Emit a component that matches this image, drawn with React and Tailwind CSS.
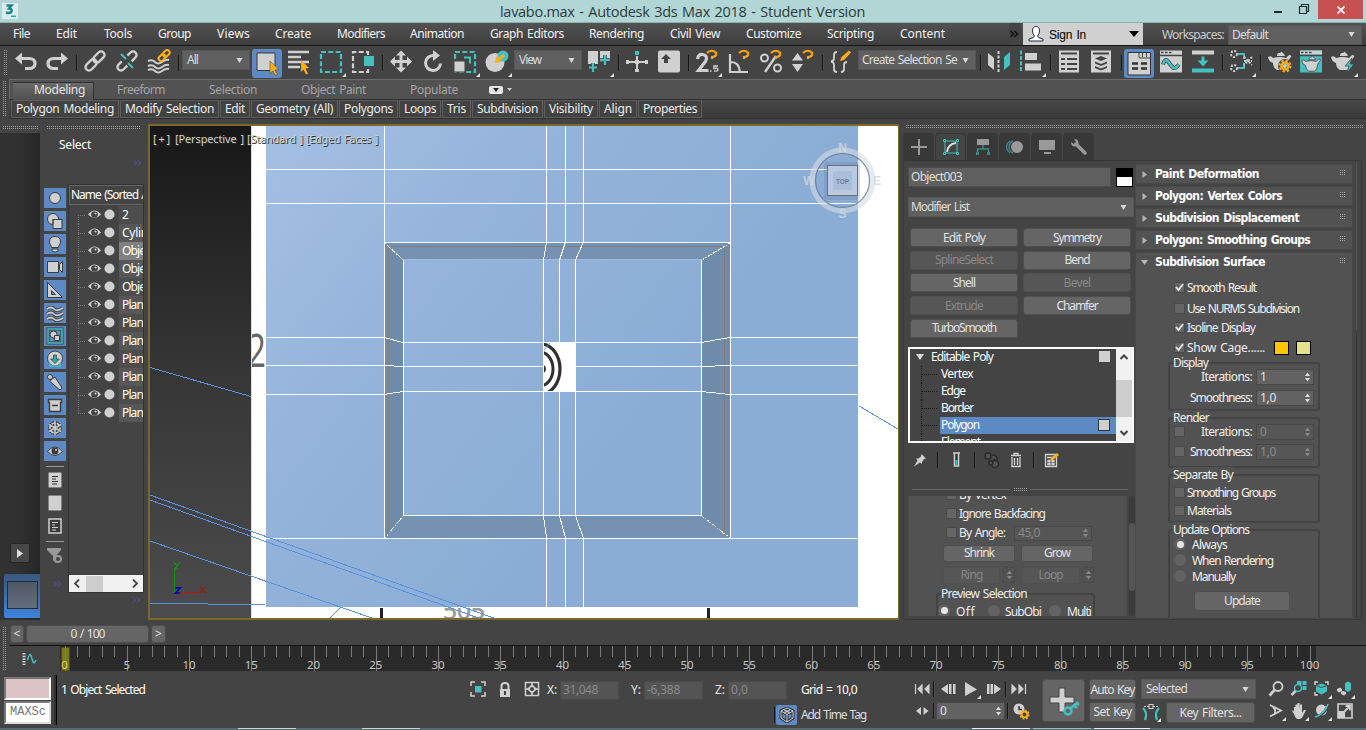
import React, { useLayoutEffect, useRef } from "react";

const L = "#d0d0d0";
const T = "#45c0c0";
const O = "#f9ae1c";

/* Text run whose tracking is adjusted to occupy w pixels */
function Txt({ w, className = "", children }) {
  const ref = useRef(null);
  useLayoutEffect(() => {
    const el = ref.current;
    el.style.letterSpacing = "0px";
    const natural = el.getBoundingClientRect().width;
    const n = el.textContent.length;
    if (w && n) el.style.letterSpacing = (w - natural) / n + "px";
  }, [w, children]);
  return (
    <span ref={ref} className={"inline-block shrink-0 whitespace-pre leading-[16px] [word-spacing:1.2px] " + className}>
      {children}
    </span>
  );
}

function Sep({ className = "" }) {
  return <div className={"h-4 w-[2px] shrink-0 border-r border-[#4f4f4f] bg-[#151515] " + className} />;
}

function Tool({ className = "", tri, children }) {
  return (
    <svg className={"h-7 w-7 shrink-0 " + className} viewBox="0 0 28 28" fill="none">
      {children}
      {tri && <path d="M27 24v4h-4z" fill="#e4e4e4" />}
    </svg>
  );
}

function Drop({ className = "", w, children }) {
  return (
    <div className={"flex h-5 shrink-0 items-center justify-between border border-[#565656] bg-[#606060] px-1 text-[#dcdcdc] " + className}>
      <Txt w={w}>{children}</Txt>
      <svg className="h-[5px] w-[7px] shrink-0" viewBox="0 0 7 5"><path d="M0.5 0h6L3.500 5z" fill="#d8d8d8" /></svg>
    </div>
  );
}

function Magnet({ x = 12, y = 2 }) {
  return <path d={`M${x} ${y + 2}q3-3 6-2q4 1 3 4q-1 2-4 2v2`} stroke="#f5a50a" strokeWidth="2.200" />;
}

function TitleBar() {
  return (
    <div className="flex h-[23px] shrink-0 border-b border-[#8fb0b1] bg-[#b2d5d5]">
      <svg className="ml-[2px] mt-[3px] h-4 w-4" viewBox="0 0 16 16">
        <rect width="16" height="16" fill="#dcebeb" />
        <path d="M4.500 2.500h5L7 5.500q3.500.5 2.500 3t-5.500 1" fill="none" stroke="#16868c" strokeWidth="2.400" />
        <rect x="9" y="12.500" width="5" height="1.500" fill="#2aa" />
      </svg>
      <div className="ml-[482px] mt-[4px] font-['Open_Sans','Noto_Sans',sans-serif] text-[15px] leading-none text-[#2d3b3c]">
        <Txt w={365} className="text-[14.500px]">lavabo.max - Autodesk 3ds Max 2018 - Student Version</Txt>
      </div>
      <div className="ml-auto flex">
        <svg className="h-[22px] w-[50px]" viewBox="0 0 50 22" fill="none" stroke="#1f2a2a">
          <path d="M6 12h8" strokeWidth="2" />
          <path d="M31.500 6.500h7v7h-7zM33.500 6V4.500h7v7H39" strokeWidth="1.200" />
        </svg>
        <div className="flex h-[19px] w-[45px] items-center justify-center bg-[#c75050]">
          <svg className="h-2 w-2" viewBox="0 0 8 8"><path d="M.5.500l7 7M7.500.500l-7 7" stroke="#fff" strokeWidth="1.700" /></svg>
        </div>
        <div className="w-[3px]" />
      </div>
    </div>
  );
}

function MenuBar() {
  return (
    <div className="flex h-[23px] shrink-0 items-center border-b border-[#161616] bg-gradient-to-b from-[#525252] to-[#3e3e3e] text-[#f2f2f2]">
      <Txt className="ml-[13px]" w={17}>File</Txt>
      <Txt className="ml-[26px]" w={21}>Edit</Txt>
      <Txt className="ml-[27px]" w={28}>Tools</Txt>
      <Txt className="ml-[26px]" w={33}>Group</Txt>
      <Txt className="ml-[26px]" w={33}>Views</Txt>
      <Txt className="ml-[25px]" w={36}>Create</Txt>
      <Txt className="ml-[26px]" w={48}>Modifiers</Txt>
      <Txt className="ml-[25px]" w={54}>Animation</Txt>
      <Txt className="ml-[26px]" w={74}>Graph Editors</Txt>
      <Txt className="ml-[25px]" w={55}>Rendering</Txt>
      <Txt className="ml-[26px]" w={50}>Civil View</Txt>
      <Txt className="ml-[26px]" w={55}>Customize</Txt>
      <Txt className="ml-[26px]" w={47}>Scripting</Txt>
      <Txt className="ml-[26px]" w={45}>Content</Txt>
      <div className="ml-[64px] flex h-full w-3 items-center bg-[#444]">
        <svg className="h-2 w-3" viewBox="0 0 12 8"><path d="M1.500 1l3 3-3 3M5.500 1l3 3-3 3" fill="none" stroke="#111" strokeWidth="1.600" /></svg>
      </div>
      <div className="ml-[2px] flex h-[22px] w-[120px] items-center bg-[#d0d0d0] text-black">
        <svg className="ml-[5px] h-4 w-4" viewBox="0 0 16 16"><path d="M4.500 5q0-4.500 3.500-4.500t3.500 4.500q0 3-2 5q0 2 5.500 3v2H1v-2q5.500-1 5.500-3q-2-2-2-5z" fill="#fff" stroke="#222b44" /></svg>
        <Txt className="ml-[5px] mt-px font-['Liberation_Sans',sans-serif] text-[12px]" w={37}>Sign In</Txt>
        <svg className="ml-[43px] h-[6px] w-[10px]" viewBox="0 0 10 6"><path d="M0 0h10L5 6z" fill="#000" /></svg>
      </div>
      <Txt className="ml-[19px] mt-[2px] text-[#c9c9c9]" w={62}>Workspaces:</Txt>
      <Drop className="ml-1 mt-px w-[134px] pl-[3px] pr-[6px]" w={36}>Default</Drop>
    </div>
  );
}

const teapot = "M0 8q3-2 5 1q7-2 13 0l3-3q3 0 2 2l-3 4q-1 8-4 9H9q-4-2-4-7q-4-1-5-6zM9 7q0-3 2-3t2-1 2 1 2 3z";

function Toolbar() {
  return (
    <div className="flex h-[33px] shrink-0 items-center overflow-hidden bg-[#444] pt-[1px]">
      <div className="ml-[3px] h-[26px] w-[4px] shrink-0 bg-[conic-gradient(#9a9a9a_25%,transparent_0)] bg-[length:2px_2px]" />
      <Tool className="ml-[7px]"><path d="M3 9.500h12q6 0 6 5t-6 5h-4" stroke={L} strokeWidth="3.200" /><path d="M1 9.500l7-6v12z" fill={L} /></Tool>
      <Tool className="ml-[3px]"><path d="M21 9.500H9q-6 0-6 5T9 19.500h4" stroke={L} strokeWidth="3.200" /><path d="M23 9.500l-7-6v12z" fill={L} /></Tool>
      <Sep className="ml-[3px]" />
      <Tool className="ml-[6px]"><g transform="rotate(-45 11 12)" stroke={L} strokeWidth="2.400"><rect x="-1" y="8.500" width="13" height="7" rx="3.500" /><rect x="10" y="8.500" width="13" height="7" rx="3.500" /></g></Tool>
      <Tool className="ml-1"><g transform="rotate(-45 11 12)" strokeWidth="2.400"><path d="M7 8.500H2.500a3.500 3.500 0 000 7H8M15 8.500h4.500a3.500 3.500 0 010 7H14" stroke={L} /></g><path d="M5 5l5 5M12 14l5 5" stroke={T} strokeWidth="2" /></Tool>
      <Tool className="ml-[3px]"><g stroke={L} strokeWidth="2"><path d="M1 12q4-2 7 1t7 0 7-2M1 17q4-2 7 1t7 0 7-2M1 21q4-2 7 1t7 0 7-2" /></g><g transform="rotate(-45 17 6)" stroke={O} strokeWidth="2"><rect x="10" y="4" width="7.500" height="5" rx="2.500" /><rect x="16" y="4" width="7.500" height="5" rx="2.500" /></g></Tool>
      <Sep className="ml-[3px]" />
      <Drop className="-mt-[6px] ml-[2px] w-[68px] pr-[6px]" w={11}>All</Drop>
      <div className="ml-[2px] flex h-[29px] w-[30px] shrink-0 rounded-[3px] bg-[#5d8ac4]">
        <svg className="h-7 w-[30px]" viewBox="0 0 30 28"><path d="M5 4h18v17.500H5z" fill={L} stroke="#3b3b3b" strokeWidth="1" /><path d="M18 12l9 8.500-4 .5 2.500 4.500-2.500 1-2-4.500-3 3z" fill={O} stroke="#3b3b3b" strokeWidth=".5" /></svg>
      </div>
      <Tool className="ml-1"><path d="M2 3h21M2 8h13M2 13h21M2 18h12" stroke={L} strokeWidth="2.500" /><path d="M15 11l8 8-3.500.5 2.500 5-2 1-2.500-5-2.500 2.500z" fill={O} /></Tool>
      <Tool className="ml-[5px]" tri><rect x="2" y="3" width="20" height="20" stroke={T} strokeWidth="2.200" strokeDasharray="5 2.300" /></Tool>
      <Tool className="ml-1"><path d="M17 6V3H2v20h15v-4" stroke={L} strokeWidth="2.200" strokeDasharray="5 2.300" /><rect x="13" y="7" width="10" height="10" fill={T} /></Tool>
      <Sep className="ml-[3px]" />
      <Tool className="ml-[6px]"><path d="M11 3v18M2 12.500h19" stroke={L} strokeWidth="3" /><path d="M11 1.500l5 5H6zM11 23.500l5-5H6zM0 12.500l5-5v10zM22 12.500l-5-5v10z" fill={L} /></Tool>
      <Tool className="ml-1"><path d="M11 6.500a7.500 7.500 0 107.500 8" stroke={L} strokeWidth="3" /><path d="M11 1l7 5.500-7 5.500z" fill={L} /></Tool>
      <Tool className="ml-[3px]" tri><rect x="2" y="3" width="20" height="20" stroke={T} strokeWidth="2.200" strokeDasharray="5 2.300" /><rect x="1" y="12" width="11" height="11" fill={L} stroke="#444" /><path d="M11 8.500h6v6" stroke={T} strokeWidth="2" /></Tool>
      <Tool className="ml-1" tri><circle cx="10" cy="13.500" r="9.500" fill={L} /><circle cx="18" cy="7" r="5.500" fill={T} /><path d="M19 6l-7 6" stroke={O} strokeWidth="3" /><path d="M10 14l1-7 5 6z" fill={O} /></Tool>
      <Drop className="-mt-[6px] ml-[1px] w-[68px] pr-[6px]" w={22}>View</Drop>
      <Tool className="ml-[5px]" tri><path d="M1 2h10v13H1zM13 2h10v9l-4 2h-6z" fill={L} /><path d="M6 14v9M2 18.500h8M18 6v10M13 11h10" stroke="#444" strokeWidth="3.600" /><path d="M6 14v9M2 18.500h8M18 6v10M13 11h10" stroke={T} strokeWidth="2.200" /></Tool>
      <Sep className="ml-[3px]" />
      <Tool className="ml-[5px]"><path d="M12 7v15M2 13h20" stroke={L} strokeWidth="2" /><path d="M10 11h4v4h-4zM1 11h3v4H1zM20 11h3v4h-3zM10 20h4v3h-4z" fill={L} /><rect x="10" y="2" width="4" height="4" fill={T} /></Tool>
      <Tool className="ml-1"><rect x="1" y="1.500" width="22" height="22" rx="2" fill={L} /><path d="M9 5l5 5H11v4H7v-4H4z" fill="#444" /></Tool>
      <Sep className="ml-[3px]" />
      <Tool className="ml-[5px]" tri><path d="M2.500 10q1-5 5-4.500q6 1 3 7L3.500 21.500h10" stroke={L} strokeWidth="3.200" /><path d="M15 22h1.500M23 17h-4v2.500q4-1 4 1t-4 1.500" stroke={L} strokeWidth="1.400" /><Magnet /></Tool>
      <Tool className="ml-1"><path d="M3 5v18h18M4 13q8 0 9 10" stroke={L} strokeWidth="2.200" /><Magnet /></Tool>
      <Tool className="ml-1"><circle cx="5.500" cy="9" r="3.500" stroke={L} strokeWidth="2" /><circle cx="18.500" cy="19" r="3.500" stroke={L} strokeWidth="2" /><path d="M17 7L6 23" stroke={L} strokeWidth="2.400" /><Magnet /></Tool>
      <Tool className="ml-1"><path d="M1 11.500h11L6.500 4zM1 15h11l-5.500 8z" fill={L} /><Magnet /></Tool>
      <Sep className="ml-[3px]" />
      <Tool className="ml-[6px]"><path d="M7 3q-3 0-3 3v3q0 3-3 3.500q3 .5 3 3.500v4q0 3 3 3M11 23q3 0 3-3v-4q0-3 3-3" stroke={L} strokeWidth="1.800" /><path d="M10 12l1.500-4L19 1.500l2 2L14 11z" fill={O} /></Tool>
      <Drop className="-mt-[6px] w-[118px] pl-[3px] pr-[6px]" w={95}>Create Selection Se</Drop>
      <Sep className="ml-1" />
      <Tool className="ml-1"><path d="M2 4l6 5v12l-6-5z" fill={L} /><path d="M12.500 2v21" stroke={L} strokeWidth="2" strokeDasharray="3 1.500" /><path d="M24 3l-6 5v13l6-5z" fill={T} /></Tool>
      <Tool className="ml-[5px]" tri><path d="M2 1.500v22" stroke={T} strokeWidth="2" strokeDasharray="4 1.500" /><path d="M6 4h12v7H6zM6 14.500h16v7H6z" fill={L} /></Tool>
      <Sep className="ml-[3px]" />
      <Tool className="ml-[6px]"><rect x="1" y="1.500" width="20" height="22" fill={L} /><path d="M3 4.500h16M3 10h4M9 10h10M3 15h4M9 15h10M3 20h4M9 20h10" stroke="#444" strokeWidth="2" /></Tool>
      <Tool className="ml-1"><rect x="1" y="1.500" width="20" height="22" fill={L} /><path d="M3 4.500h16" stroke="#444" strokeWidth="2" /><path d="M11 7l6 2.500-6 2.500-6-2.500zM5 12.500l6 2.500 6-2.500v2L11 17 5 14.500zM5 17l6 2.500 6-2.500v2L11 21.500 5 19z" fill="#444" /></Tool>
      <Sep className="ml-[3px]" />
      <div className="ml-px h-[29px] w-[30px] shrink-0 rounded-[3px] bg-[#5d8ac4]">
        <svg className="h-7 w-[30px]" viewBox="0 0 30 28"><path d="M4 3.500h22.500V26H4z" fill={L} stroke="#333" /><path d="M15 4v4q0 1 1 1h10M18.500 4v4M22.500 4v4" stroke="#444" fill="none" /><path d="M8 14.500h6M17 14.500h6M8 19.500h6M17 19.500h6" stroke="#333" strokeWidth="2.500" /></svg>
      </div>
      <Tool className="ml-[5px]"><rect x="1" y="1.500" width="22" height="22" fill={L} /><path d="M0 6.500h24M2 3.500h2.500M6 3.500h2.500M10 3.500h2.500" stroke="#444" strokeWidth="1.600" /><path d="M4 15.500q2-7 5-3t5 6 6-3" stroke="#444" strokeWidth="4" /><path d="M4 15.500q2-7 5-3t5 6 6-3" stroke={T} strokeWidth="2.600" /></Tool>
      <Tool className="ml-1"><rect x="1" y="1.500" width="22" height="4" fill={L} /><rect x="1" y="19.500" width="22" height="4" fill={T} /><path d="M10.500 7.500h3v4h4L12 17.500l-5.500-6h4z" fill={T} /></Tool>
      <Sep className="ml-[3px]" />
      <Tool className="ml-[5px]" tri><path d="M9 5h6v5M9 19h6v-5" stroke={T} strokeWidth="2" /><g stroke={L} strokeWidth="2" strokeDasharray="2 1.500"><circle cx="5" cy="5" r="3" /><circle cx="5" cy="19" r="3" /><path d="M15 8l8 8M23 8l-8 8M15 12h8" /></g></Tool>
      <Sep className="ml-[3px]" />
      <Tool className="ml-[6px]"><path d={teapot} fill={L} /><circle cx="17" cy="17" r="4.500" stroke="#444" strokeWidth="5" /><circle cx="17" cy="17" r="3.500" stroke={O} strokeWidth="2.500" /><circle cx="17" cy="17" r="5.500" stroke={O} strokeWidth="2" strokeDasharray="2.300 2" /></Tool>
      <Tool className="ml-[3px]"><rect x="1" y="1.500" width="22" height="22" fill={T} /><rect x="1" y="1.500" width="22" height="4" fill={L} /><path d="M2 3.500h2.500M6 3.500h2.500M10 3.500h2.500M1 6.500h22" stroke="#444" strokeWidth="1.500" /><path d={teapot} fill={L} stroke="#444" transform="translate(2.500 5) scale(.82)" /></Tool>
      <Tool className="ml-1" tri><path d={teapot} fill={L} /><path d="M21 9l-7 8h4l-2 7 7-9h-4z" fill={T} stroke="#444" strokeWidth=".8" /></Tool>
    </div>
  );
}

function Cell({ ml = "ml-px", w, children }) {
  return (
    <div className={"flex h-[18px] shrink-0 items-center border border-[#5d5d5d] bg-[#424242] px-1 " + ml}>
      <Txt w={w}>{children}</Txt>
    </div>
  );
}

function Ribbon() {
  return (
    <div className="flex h-[40px] shrink-0 bg-[#444]">
      <div className="ml-[2px] mt-[2px] h-9 w-[4px] bg-[conic-gradient(#9a9a9a_25%,transparent_0)] bg-[length:2px_2px]" />
      <div className="ml-[3px] flex flex-1 flex-col">
        <div className="flex h-[21px] items-center border-b border-l border-t border-b-[#2e2e2e] border-l-[#696969] border-t-[#6c6c6c] bg-[#525252] text-[#a5a5a5]">
          <div className="ml-[3px] mt-[2px] flex h-[18px] w-[81px] items-center border-r border-t border-[#333] bg-gradient-to-b from-[#6a6a6a] to-[#505050] pb-[2px] text-[#e6e6e6]">
            <Txt className="ml-[21px]" w={51}>Modeling</Txt>
          </div>
          <Txt className="ml-[23px]" w={48}>Freeform</Txt>
          <Txt className="ml-[44px]" w={48}>Selection</Txt>
          <Txt className="ml-[44px]" w={65}>Object Paint</Txt>
          <Txt className="ml-[44px]" w={48}>Populate</Txt>
          <div className="ml-[31px] flex h-2 w-[14px] items-center justify-center rounded-[2px] bg-[#e6e6e6]"><svg className="h-1 w-[6px]" viewBox="0 0 6 4"><path d="M0 0h6L3 4z" fill="#222" /></svg></div>
          <svg className="ml-1 h-[3px] w-[5px]" viewBox="0 0 5 3"><path d="M0 0h5L2.500 3z" fill="#d0d0d0" /></svg>
        </div>
        <div className="flex h-[19px] border-b border-[#303030] bg-gradient-to-b from-[#484848] to-[#3a3a3a] text-[#ededed]">
          <Cell ml="ml-[2px]" w={98}>Polygon Modeling</Cell>
          <Cell w={89}>Modify Selection</Cell>
          <Cell w={20}>Edit</Cell>
          <Cell w={77}>Geometry (All)</Cell>
          <Cell w={49}>Polygons</Cell>
          <Cell w={32}>Loops</Cell>
          <Cell w={19}>Tris</Cell>
          <Cell w={61}>Subdivision</Cell>
          <Cell w={44}>Visibility</Cell>
          <Cell w={28}>Align</Cell>
          <Cell w={54}>Properties</Cell>
        </div>
      </div>
    </div>
  );
}

const K = "#3b3b3b";
const filterIcons = [
  <circle cx="11" cy="10" r="5.500" fill={L} stroke={K} />,
  <g fill={L} stroke={K}><circle cx="9" cy="8" r="5.500" /><rect x="9" y="8.500" width="9" height="9" /><path d="M9 13.500v-5h5.500" fill="none" /></g>,
  <path d="M5.500 8q0-5.500 5.500-5.500T16.500 8q0 2-2 4.500v1h-7v-1q-2-2.500-2-4.500zM8 15h6v2l-2 1h-2l-2-1z" fill={L} stroke={K} />,
  <path d="M3.500 4.500h11v11h-11zM15.500 7.500l3-3v11l-3-3z" fill={L} stroke={K} />,
  <path fillRule="evenodd" d="M3.500 2.500l15 15h-15zM7.500 10.500v4h4z" fill={L} stroke={K} />,
  <g fill="none"><path d="M3 6q4-3 7 0t9-1M3 11q4-3 7 0t9-1M3 16q4-3 7 0t9-1" stroke={K} strokeWidth="3.600" /><path d="M3 6q4-3 7 0t9-1M3 11q4-3 7 0t9-1M3 16q4-3 7 0t9-1" stroke={L} strokeWidth="1.700" /></g>,
  <g><rect x="4" y="3" width="14" height="14" fill="none" stroke={K} strokeWidth="3" /><rect x="4" y="3" width="14" height="14" fill="none" stroke={T} strokeWidth="1.500" /><circle cx="9.500" cy="8.500" r="3.500" fill={L} stroke={K} /><path d="M10.500 9.500h5v5h-5z" fill={L} stroke={K} /></g>,
  <g><circle cx="11" cy="9.500" r="7.500" fill={L} stroke={K} /><path d="M9.500 6h3v4h3L11 14.500 6.500 10h3z" fill="#2ba9a4" stroke={K} strokeWidth=".7" /><path d="M6 14v3h10v-3" fill="none" stroke={T} strokeWidth="1.500" /></g>,
  <g fill={L} stroke={K}><path d="M8 7l3-2 7 11-2 2L6 9.500z" /><circle cx="6" cy="5" r="2.500" /></g>,
  <path d="M4.500 4.500h13v3h-1v9h-11v-9h-1zM8 10.500h6" fill={L} stroke={K} strokeWidth="1.400" />,
  <g fill="none"><path d="M11 3v14M5 6.500l12 7M17 6.500l-12 7" stroke={K} strokeWidth="3.600" /><circle cx="11" cy="10" r="5" stroke={K} strokeWidth="3.400" /><path d="M11 3v14M5 6.500l12 7M17 6.500l-12 7" stroke={L} strokeWidth="1.600" /><circle cx="11" cy="10" r="5" stroke={L} strokeWidth="1.700" strokeDasharray="3 2.236" strokeDashoffset="1.500" /></g>,
  <g><path d="M3.500 10.500q7.500-9 15 0q-7.500 8-15 0z" fill={L} stroke={K} /><circle cx="11" cy="10" r="3.500" fill={K} /><circle cx="12" cy="9" r="1" fill={L} /></g>,
];

function Chev({ className = "" }) {
  return <svg className={"h-[6px] w-[9px] " + className} viewBox="0 0 9 6"><path d="M1 .5l2.500 2.500L1 5.500M5 .5l2.500 2.500L5 5.500" fill="none" stroke="#4e4e86" strokeWidth="1.300" /></svg>;
}

function Dots({ className = "" }) {
  return <div className={"h-[3px] bg-[conic-gradient(#a0a0a0_25%,transparent_0)] bg-[length:2px_2px] " + className} />;
}

const names = ["2", "Cylin", "Obje", "Obje", "Obje", "Plan", "Plan", "Plan", "Plan", "Plan", "Plan", "Plan"];
const nameWidth = { Cylin: 26, Obje: 23, Plan: 21 };

function Explorer() {
  return (
    <div className="flex w-[148px] shrink-0">
      <div className="flex w-10 flex-col pt-[7px]">
        <Dots className="ml-[2px] w-9" />
        <div className="mt-[4px] flex flex-1 flex-col bg-gradient-to-r from-[#323232] via-[#303030] to-[#262626]">
          <div className="ml-[10px] mt-[410px] flex h-5 w-5 items-center justify-center rounded-[2px] border border-[#262626] bg-[#484848]">
            <svg className="h-[9px] w-[6px]" viewBox="0 0 6 9"><path d="M0 0l6 4.500L0 9z" fill="#dcdcdc" /></svg>
          </div>
          <div className="ml-1 mt-[11px] h-[44px] rounded-l-[2px] bg-gradient-to-b from-[#39597f] to-[#3f82dd] pl-[3px] pt-[7px]">
            <div className="h-7 w-[31px] border border-[#1f2c3c] bg-gradient-to-b from-[#4f5966] to-[#636e7c]" />
          </div>
        </div>
      </div>
      <div className="flex w-[104px] flex-col pl-1 pt-[7px]">
        <Dots className="ml-[2px] w-[95px]" />
        <Txt className="ml-[15px] mt-[8px] self-start text-white" w={32}>Select</Txt>
        <Chev className="ml-[89px] mt-[7px] shrink-0" />
        <div className="mt-[18px] flex">
          <div className="flex w-[22px] flex-col gap-[3px] pt-[4px]">
            {filterIcons.map((ic, i) => (
              <svg key={i} className="h-5 w-[22px] bg-[#5d8ac4]" viewBox="0 0 22 20">{ic}</svg>
            ))}
            <div className="ml-[2px] mt-[2px] h-px w-[18px] bg-[#999]" />
            <svg className="ml-1 mt-[2px] h-4 w-[14px]" viewBox="0 0 14 16"><rect width="14" height="16" fill={L} stroke="#333" /><path d="M4 4.500h6M4 7h4M4 9.500h6M4 12h5" stroke="#333" /></svg>
            <svg className="ml-1 mt-1 h-4 w-[14px]" viewBox="0 0 14 16"><rect width="14" height="16" fill={L} stroke="#333" /></svg>
            <svg className="ml-1 mt-1 h-4 w-[14px]" viewBox="0 0 14 16"><rect x="1" y="1" width="12" height="14" fill="#3b3b3b" stroke={L} strokeWidth="1.500" /><path d="M4 4.500h6M4 7h3M4 9.500h6M4 12h4" stroke={L} /></svg>
            <div className="ml-[2px] mt-[4px] h-px w-[18px] bg-[#999]" />
            <svg className="ml-[3px] mt-[3px] h-4 w-4" viewBox="0 0 16 16"><path d="M0 0h14v2L9 8v7l-3-3V8L0 2z" fill="#999" /><circle cx="11" cy="11" r="3" fill="#444" stroke="#999" strokeWidth="2" /></svg>
            <Chev className="ml-[9px] mt-[14px]" />
          </div>
          <div className="ml-[2px] flex w-[76px] flex-col">
            <div className="flex h-[409px] flex-col overflow-hidden border-x border-t border-[#333]">
              <div className="flex h-5 shrink-0 items-center overflow-hidden border border-r-0 border-[#666] bg-[#444] pl-px text-white"><Txt w={77}>Name (Sorted A</Txt></div>
              <div className="mt-px flex flex-col">
                {names.map((n, i) => (
                  <div key={i} className="flex h-[18px] items-center">
                    <svg className="h-[18px] w-[50px] shrink-0" viewBox="0 0 50 18">
                      <path d={`M9.500 ${i ? 0 : 9}V${i === 11 ? 9 : 18}M9 9.500h8`} stroke="#777" strokeDasharray="1 1" fill="none" />
                      <path d="M19 8.500q6.500-8 13 0q-6.500 7-13 0z" fill={L} /><circle cx="25.500" cy="8.500" r="3.300" fill="#444" /><circle cx="26.500" cy="7.500" r="1" fill={L} />
                      <circle cx="40.500" cy="8.500" r="5" fill={L} />
                    </svg>
                    <div className={"flex h-[18px] flex-1 items-center overflow-hidden pl-[3px] text-white " + (i === 2 ? "bg-[#808080]" : i % 2 ? "bg-[#575757]" : "bg-[#4d4d4d]")}>
                      <Txt w={nameWidth[n]}>{n}</Txt>
                    </div>
                  </div>
                ))}
              </div>
            </div>
            <div className="-mt-[18px] flex h-[18px] items-center border-x border-b border-[#333] bg-[#f1f1f1]">
              <svg className="ml-[5px] h-[9px] w-[6px]" viewBox="0 0 6 9"><path d="M5 0.500L1 4.500l4 4" fill="none" stroke="#444" strokeWidth="1.800" /></svg>
              <div className="ml-[6px] h-4 w-[17px] bg-[#cdcdcd]" />
              <svg className="ml-[29px] h-[9px] w-[6px]" viewBox="0 0 6 9"><path d="M1 0.500l4 4-4 4" fill="none" stroke="#444" strokeWidth="1.800" /></svg>
            </div>
            <Chev className="ml-[64px] mt-1" />
          </div>
        </div>
      </div>
    </div>
  );
}

function Viewport() {
  return (
    <div className="relative mt-[5px] h-[496px] w-[751px] shrink-0">
      <svg className="h-[496px] w-[751px]" viewBox="148 124 751 496" fill="none" shapeRendering="crispEdges">
        <defs>
          <linearGradient id="dk" x1="0" y1="0" x2="0" y2="1"><stop stopColor="#171717" /><stop offset=".5" stopColor="#363636" /><stop offset="1" stopColor="#4c4c4c" /></linearGradient>
          <linearGradient id="bl" gradientUnits="userSpaceOnUse" x1="266" y1="126" x2="640" y2="420"><stop stopColor="#a4bfe4" /><stop offset=".5" stopColor="#94b3da" /><stop offset="1" stopColor="#8badd5" /></linearGradient>
          <clipPath id="hole"><rect x="544" y="343" width="31" height="48" /></clipPath>
          <clipPath id="vp"><rect x="150" y="608" width="748" height="10" /></clipPath>
          <clipPath id="lf"><rect x="252" y="320" width="14" height="60" /></clipPath>
        </defs>
        <rect x="148" y="124" width="751" height="496" fill="#7b692b" />
        <rect x="150" y="126" width="748" height="492" fill="#fff" />
        <rect x="150" y="126" width="101" height="492" fill="url(#dk)" />
        <path d="M251.500 126v492" stroke="#ddd" />
        <rect x="266" y="126" width="592" height="481" fill="url(#bl)" />
        <path d="M385 243h345v295H385z" fill="#6e8baa" />
        <path d="M385 243h345l-28 17H403zM385 538h345l-28-22H403z" fill="#7592b3" />
        <path d="M388.500 246v289M724.500 246v289M388 246.500h336" stroke="#7a7c86" />
        <path d="M403 260h299v256H403z" fill="url(#bl)" />
        <g stroke="#fff">
          <path d="M384.500 126v412M730.500 126v412M266 169.500h592M266 203.500h592M385 242.500h345M266 538.500h592M403.500 260v256M701.500 260v256M403 515.500h299" />
          <path d="M403 259.500h299" stroke="#a3bbd8" />
          <path d="M546.500 126v116l-3 18v256l3 22v69M565.500 126v116l-6 18v256l6 22v69M583.500 126v116l-8 18v256l8 22v69" />
          <path d="M385 243l18 17M730 243l-28 17M385 538l18-22M730 538l-28-22" strokeDasharray="2 1" />
          <path d="M266 337.500h118l19 5h298l29-5h128M266 365.500h118l19 1h298l29-1h128M266 394.500h118l19-3h298l29 3h128" />
        </g>
        <rect x="543" y="342" width="33" height="49" fill="#fff" />
        <g clipPath="url(#hole)" shapeRendering="auto" stroke="#303030">
          <ellipse cx="541" cy="369" rx="19" ry="25" strokeWidth="3.200" />
          <ellipse cx="540" cy="369" rx="13" ry="17" strokeWidth="3" />
          <circle cx="542" cy="369" r="3" strokeWidth="2" />
          <path d="M543 351l7-8" stroke="#5b8edb" />
        </g>
        <g shapeRendering="auto" className="font-['Open_Sans',sans-serif]">
          <text x="247" y="367" fontSize="46" fill="#666" clipPath="url(#lf)" textLength="19" lengthAdjust="spacingAndGlyphs">2</text>
          <g clipPath="url(#vp)"><text x="443" y="619" fontSize="23" fill="#999" stroke="#999" strokeWidth=".6" textLength="42" lengthAdjust="spacingAndGlyphs">505</text></g>
        </g>
        <path d="M381.500 608v10M708.500 608v10" stroke="#222" strokeWidth="3" />
        <path d="M150 367.500L251 396.500M859 406l39 23M150 495l345 123.500M150 500l330 118.500M150 541l222 77M150 603.500h58M208 604.500h57M330 618l10-10" stroke="#5a92e0" />
        <path d="M174.500 568v24" stroke="#109010" />
        <path d="M178 592.500h23" stroke="#c81010" />
        <path d="M174 562l3 4 3-4M177 566l-2 4" stroke="#20861f" strokeWidth="1.500" />
        <path d="M200 587l5 6M205 587l-5 6" stroke="#a01818" strokeWidth="1.500" />
        <path d="M175 588h5l-4 5h4" stroke="#0808b0" strokeWidth="1.800" />
        <g shapeRendering="auto">
          <circle cx="842.500" cy="180.500" r="30" stroke="#d5dce6" strokeOpacity=".6" strokeWidth="6" />
          <circle cx="842.500" cy="180.500" r="27" stroke="#60738d" strokeOpacity=".8" strokeWidth="1.200" />
          <rect x="824" y="162" width="36" height="38" rx="3" fill="#657da0" opacity=".25" />
          <rect x="827.500" y="165.500" width="30" height="30" fill="#b7cae1" stroke="#6d6f78" />
          <rect x="833" y="171" width="19" height="19" fill="#a9bedb" />
          <g textAnchor="middle" fontWeight="bold" className="font-['Liberation_Sans',sans-serif]">
            <text x="842.500" y="183.500" fontSize="8" fill="#6b7b90" textLength="13" lengthAdjust="spacingAndGlyphs">TOP</text>
            <g fill="#ced7e2" fillOpacity=".85" fontSize="12"><text x="842.500" y="152">N</text><text x="809" y="185">W</text><text x="877" y="185">E</text><text x="842.500" y="218">S</text></g>
          </g>
        </g>
      </svg>
      <div className="absolute left-[5px] top-[7px] flex text-[11px] text-[#cfcfcf] [text-shadow:1px_1px_0_#333]">
        <Txt w={19}>[+]</Txt><Txt className="ml-[3px]" w={69}>[Perspective ]</Txt><Txt className="ml-[3px]" w={56}>[Standard ]</Txt><Txt className="ml-[3px]" w={72}>[Edged Faces ]</Txt>
      </div>
    </div>
  );
}

function Btn({ dis, className = "", w, children }) {
  return (
    <div className={"flex shrink-0 items-center justify-center rounded-[3px] border " + (dis ? "border-[#505050] bg-[#565656] text-[#888] " : "border-[#4e4e4e] bg-[#656565] text-[#e2e2e2] ") + className}>
      <Txt w={w}>{children}</Txt>
    </div>
  );
}

function Arrows({ dis }) {
  return <svg className="h-[10px] w-[5px] shrink-0" viewBox="0 0 5 10"><path d="M0 4h5L2.500 0.500zM0 6h5L2.500 9.500z" fill={dis ? "#888" : "#ddd"} /></svg>;
}

function Spin({ dis, className = "", w, children }) {
  return (
    <div className={"flex shrink-0 items-center justify-between border border-[#484848] pl-[3px] pr-[3px] " + (dis ? "bg-[#565656] text-[#8a8a8a] " : "bg-[#626262] text-[#e2e2e2] ") + className}>
      <Txt w={w}>{children}</Txt><Arrows dis={dis} />
    </div>
  );
}

function Check({ on, className = "" }) {
  return (
    <div className={"mb-px h-[11px] w-[11px] shrink-0 border border-[#4a4a4a] bg-[#656565] " + className}>
      {on && <svg viewBox="0 0 9 9"><path d="M1 4l2.500 3L8 1" fill="none" stroke="#e6e6e6" strokeWidth="1.900" /></svg>}
    </div>
  );
}

function Radio({ on, className = "" }) {
  return (
    <div className={"mb-[2px] flex h-3 w-3 shrink-0 items-center justify-center rounded-full bg-[#636363] " + className}>
      {on && <div className="h-[7px] w-[7px] rounded-full bg-[#e6e6e6]" />}
    </div>
  );
}

function Group({ title, w, className = "", children }) {
  return (
    <div className={"shrink-0 rounded-[3px] border-2 border-[#434343] px-[3px] " + className}>
      <div className="-mt-[9px] flex h-4"><Txt w={w} className="bg-[#525252]">{title}</Txt></div>
      {children}
    </div>
  );
}

function Head({ open, w, children }) {
  return (
    <div className="flex h-[18px] shrink-0 items-center font-bold text-white">
      <svg className="ml-[5px] h-[7px] w-[7px]" viewBox="0 0 7 7"><path d={open ? "M0 1h7L3.500 6z" : "M1.500 0v7L6 3.500z"} fill="#b5b5b5" /></svg>
      <Txt className="ml-[7px] font-['DejaVu_Sans_Condensed','Noto_Sans',sans-serif]" w={w}>{children}</Txt>
      <div className="mb-[3px] ml-auto mr-[7px] h-[6px] w-[6px] bg-[conic-gradient(#a0a0a0_25%,transparent_0)] bg-[length:2px_2px]" />
    </div>
  );
}

function Tab({ on, children }) {
  return (
    <div className={"mr-px flex h-[27px] w-[31px] items-center justify-center rounded-t-[4px] " + (on ? "border-x border-t border-[#363636] bg-[#444]" : "bg-[#383838]")}>
      <svg className="h-[18px] w-[18px]" viewBox="0 0 18 18" fill="none">{children}</svg>
    </div>
  );
}

const stack = [["Vertex", 32], ["Edge", 24], ["Border", 32], ["Polygon", 38], ["Element", 39]];
const mods = [["Edit Poly", 42], ["Symmetry", 48], ["SplineSelect", 58, 1], ["Bend", 25], ["Shell", 22], ["Bevel", 27, 1], ["Extrude", 38, 1], ["Chamfer", 41], ["TurboSmooth", 64]];

function CommandPanel() {
  return (
    <div className="flex min-w-0 flex-1 flex-col pl-1 pt-[6px]">
      <Dots className="ml-[2px] w-[459px]" />
      <div className="mt-[5px] flex h-[27px]">
        <Tab><path d="M9 1v16M1 9h16" stroke="#999" strokeWidth="2" /></Tab>
        <Tab on><path d="M3 3h12v12H3z" stroke={T} /><path d="M1.500 1.500h2v2h-2zM14.500 1.500h2v2h-2zM1.500 14.500h2v2h-2zM14.500 14.500h2v2h-2z" fill="#444" stroke={T} /><path d="M5 14q1-8 9-9" stroke="#ddd" strokeWidth="2" /></Tab>
        <Tab><rect x="3" y="1" width="12" height="6" fill="#999" /><path d="M9 7v4M3.500 14v-3h11v3" stroke="#3b8886" strokeWidth="1.500" /><path d="M2 14h3v3H2zM13 14h3v3h-3z" fill="#3b8886" /></Tab>
        <Tab><circle cx="11" cy="9" r="6" fill="#999" /><path d="M7 3a6.500 6.500 0 000 12M4 3a7 7 0 000 12" stroke="#3b8886" strokeWidth="1.400" /></Tab>
        <Tab><path d="M1 2h16v10H1zM6 14h7v2H6z" fill="#999" /></Tab>
        <Tab><path d="M6 6l9 9" stroke="#999" strokeWidth="3.500" strokeLinecap="round" /><path d="M1 4q0 5 5 4.500L8.500 6Q9 1 4 1l2 3-2 2z" fill="#999" /></Tab>
      </div>
      <div className="mr-1 flex h-[460px] rounded-b-[3px] border border-[#383838] px-1 pt-[2px]">
        <div className="flex w-[227px] shrink-0 flex-col overflow-hidden">
          <div className="mt-[4px] flex items-center">
            <div className="flex h-5 w-[203px] items-center border border-[#4c4c4c] bg-[#606060] pl-[2px] text-[#dedede]"><Txt w={51}>Object003</Txt></div>
            <div className="ml-[5px] h-[19px] w-[17px] border border-black bg-gradient-to-b from-black from-50% to-white to-50%" />
          </div>
          <Drop className="mt-[10px] w-[226px] pl-[2px] pr-[6px]" w={58}>Modifier List</Drop>
          <div className="mt-[11px] grid grid-cols-[108px_108px] gap-x-[5px] gap-y-[3.700px] pl-[2px]">
            {mods.map(([n, w, d]) => <Btn key={n} dis={d} w={w} className="h-[19px]">{n}</Btn>)}
          </div>
          <div className="mt-[9px] flex h-[96px] w-[226px] shrink-0 border-2 border-[#fafafa]">
            <div className="flex flex-1 flex-col overflow-hidden text-white">
              <div className="flex h-[17px] shrink-0 items-center">
                <svg className="ml-[6px] h-[6px] w-2" viewBox="0 0 8 6"><path d="M0 0h8L4 6z" fill="#ddd" /></svg>
                <Txt className="ml-[7px]" w={62}>Editable Poly</Txt>
                <div className="mb-[2px] ml-auto mr-[6px] h-[11px] w-[11px] bg-[#d0d0d0]" />
              </div>
              {stack.map(([n, w], i) => (
                <div key={n} className="flex h-[17px] shrink-0 items-center">
                  <svg className="h-[17px] w-[30px] shrink-0" viewBox="0 0 30 17"><path d="M11.500 0v17M12 8.500h16" stroke="#111" strokeDasharray="1 1" /></svg>
                  <div className={"flex h-[17px] flex-1 items-center justify-between pl-px " + (i === 3 ? "bg-[#5d8ac4]" : "")}>
                    <Txt w={w}>{n}</Txt>
                    {i === 3 && <div className="mb-px mr-[6px] h-3 w-3 border border-[#333] bg-[#d0d0d0]" />}
                  </div>
                </div>
              ))}
            </div>
            <div className="flex w-4 flex-col items-center bg-[#f1f1f1]">
              <svg className="mt-[5px] h-[6px] w-2" viewBox="0 0 8 6"><path d="M.5 5L4 1.500 7.500 5" fill="none" stroke="#444" strokeWidth="2" /></svg>
              <div className="mt-5 h-[37px] w-4 bg-[#cdcdcd]" />
              <svg className="mt-[13px] h-[6px] w-2" viewBox="0 0 8 6"><path d="M.5 1L4 4.500 7.500 1" fill="none" stroke="#444" strokeWidth="2" /></svg>
            </div>
          </div>
          <div className="mt-[7px] flex h-5 shrink-0 items-center">
            <svg className="ml-[5px] h-[14px] w-[14px]" viewBox="0 0 14 14"><path d="M8.500 1l4.500 4.500-2 .5-2 3v2L7 9.500 1 13.500 4.500 7.500 3 5.500h2.500l2.500-2z" fill={L} /></svg>
            <Sep className="ml-[10px]" />
            <svg className="ml-[13px] h-4 w-[9px]" viewBox="0 0 9 16"><path d="M1 1h7M2.500 1v13h4V1" fill="#333" stroke={L} strokeWidth="1.500" /><path d="M3.500 8h2v5.500h-2z" fill={T} /></svg>
            <Sep className="ml-[13px]" />
            <svg className="ml-2 h-4 w-4" viewBox="0 0 16 16" fill="#555" stroke="#2a2a2a" strokeWidth="1.500"><circle cx="4" cy="4" r="3" /><circle cx="11" cy="12" r="3.500" /><path d="M8 3q6 0 5 6l-3-2" /><circle cx="7" cy="11" r="2" /></svg>
            <svg className="ml-[11px] h-4 w-[10px]" viewBox="0 0 10 16"><path d="M0 3.500h10M3 3V1.500h4V3M1 5v9.500h8V5M3.500 6v7M6.500 6v7" fill="none" stroke={L} strokeWidth="1.300" /></svg>
            <Sep className="ml-[12px]" />
            <svg className="ml-[9px] h-4 w-4" viewBox="0 0 16 16"><path d="M1.500 2.500h11v12h-11zM3 5.500h8M4 8.500h2v1H4zM8 8.500h2v1H8zM4 11.500h2v1H4zM8 11.500h2v1H8z" fill="none" stroke={L} strokeWidth="1.300" /><path d="M6 9l1-3 6-5 2 2-6 5z" fill={O} /></svg>
          </div>
          <div className="mt-[18px] flex items-center">
            <div className="ml-1 h-px w-[98px] bg-[#666]" /><Dots className="ml-[3px] w-[14px]" /><div className="ml-[3px] h-px w-[98px] bg-[#666]" />
          </div>
          <div className="mt-[5px] flex h-[120px] shrink-0">
            <div className="flex w-[219px] flex-col overflow-hidden border-x border-[#4c4c4c] bg-[#525252] text-[#ededed]">
              <div className="-mt-[10px] flex h-[18px] shrink-0 items-center pl-[37px]"><Check /><Txt className="ml-[2px]" w={47}>By Vertex</Txt></div>
              <div className="mt-px flex h-[18px] shrink-0 items-center pl-[37px]"><Check /><Txt className="ml-[2px]" w={86}>Ignore Backfacing</Txt></div>
              <div className="mt-px flex h-[19px] shrink-0 items-center pl-[37px]"><Check /><Txt className="ml-[2px]" w={46}>By Angle:</Txt><Spin dis className="ml-[9px] h-[15px] w-[78px]" w={22}>45,0</Spin></div>
              <div className="mt-[2px] flex gap-[6px] pl-[34px]"><Btn className="h-[17px] w-[72px]" w={30}>Shrink</Btn><Btn className="h-[17px] w-[72px]" w={26}>Grow</Btn></div>
              <div className="mt-[5px] flex pl-[34px]">
                <Btn dis className="h-[17px] w-[57px]" w={22}>Ring</Btn><div className="ml-[3px] flex h-4 w-3 items-center justify-center border border-[#4a4a4a]"><Arrows dis /></div>
                <Btn dis className="ml-[6px] h-[17px] w-[59px]" w={24}>Loop</Btn><div className="ml-[2px] flex h-4 w-3 items-center justify-center border border-[#4a4a4a]"><Arrows dis /></div>
              </div>
              <Group title="Preview Selection" w={86} className="ml-[27px] mt-[9px] h-[60px] w-[159px]">
                <div className="mt-[2px] flex h-4 items-center"><Radio on className="-ml-[3px]" /><Txt className="ml-[6px]" w={19}>Off</Txt><Radio className="ml-[13px]" /><Txt className="ml-[5px]" w={36}>SubObj</Txt><Radio className="ml-[8px]" /><Txt className="ml-[6px]" w={24}>Multi</Txt></div>
              </Group>
            </div>
            <div className="ml-[2px] w-[6px] rounded-[3px] bg-[#3a3a3a] pt-[27px]"><div className="h-[68px] rounded-[3px] bg-[#555]" /></div>
          </div>
        </div>
        <div className="flex w-[218px] shrink-0 flex-col gap-[2px] overflow-hidden pt-px">
          {[["Paint Deformation", 104], ["Polygon: Vertex Colors", 127], ["Subdivision Displacement", 144], ["Polygon: Smoothing Groups", 155]].map(([n, w]) => (
            <div key={n} className="h-5 shrink-0 rounded-[2px] border border-[#484848] bg-[#525252]"><Head w={w}>{n}</Head></div>
          ))}
          <div className="flex flex-1 flex-col overflow-hidden rounded-t-[2px] border border-[#484848] bg-[#525252] text-[#f0f0f0]">
            <Head open w={110}>Subdivision Surface</Head>
            <div className="flex flex-col pl-[33px]">
              <div className="mt-[9px] flex h-4 items-center pl-[5px]"><Check on /><Txt className="ml-[2px]" w={69}>Smooth Result</Txt></div>
              <div className="mt-[5px] flex h-4 items-center pl-[5px]"><Check /><Txt className="ml-[2px]" w={112}>Use NURMS Subdivision</Txt></div>
              <div className="mt-[3px] flex h-4 items-center pl-[5px]"><Check on /><Txt className="ml-[2px]" w={68}>Isoline Display</Txt></div>
              <div className="mt-[4px] flex h-4 items-center pl-[5px]"><Check on /><Txt className="ml-[2px]" w={78}>Show Cage......</Txt><div className="mb-px ml-[9px] h-[14px] w-[15px] border border-black bg-[#ffc600]" /><div className="mb-px ml-[7px] h-[14px] w-[15px] border border-black bg-[#e3e28b]" /></div>
              <Group title="Display" w={35} className="-ml-px mt-[6px] h-[49px] w-[152px]">
                <div className="-mt-[2px] flex h-4 items-center justify-end pr-px"><Txt w={51}>Iterations:</Txt><Spin className="ml-1 h-4 w-[58px]">1</Spin></div>
                <div className="mt-[5px] flex h-4 items-center justify-end pr-px"><Txt w={62}>Smoothness:</Txt><Spin className="ml-1 h-4 w-[58px]" w={16}>1,0</Spin></div>
              </Group>
              <Group title="Render" w={36} className="-ml-px mt-[6px] h-[51px] w-[152px]">
                <div className="-mt-[2px] flex h-4 items-center pr-px"><Check className="ml-px" /><Txt w={51} className="ml-auto">Iterations:</Txt><Spin dis className="ml-1 h-4 w-[58px]">0</Spin></div>
                <div className="mt-[4px] flex h-4 items-center pr-px"><Check className="ml-px" /><Txt w={62} className="ml-auto">Smoothness:</Txt><Spin dis className="ml-1 h-4 w-[58px]" w={16}>1,0</Spin></div>
              </Group>
              <Group title="Separate By" w={60} className="-ml-px mt-[6px] h-[49px] w-[152px]">
                <div className="mt-[2px] flex h-4 items-center"><Check className="ml-px" /><Txt className="ml-[2px]" w={88}>Smoothing Groups</Txt></div>
                <div className="mt-[2px] flex h-4 items-center"><Check className="ml-px" /><Txt className="ml-[2px]" w={44}>Materials</Txt></div>
              </Group>
              <Group title="Update Options" w={76} className="-ml-px mt-[6px] h-[100px] w-[152px]">
                <div className="-mt-px flex h-4 items-center"><Radio on className="ml-px" /><Txt className="ml-[6px]" w={35}>Always</Txt></div>
                <div className="flex h-4 items-center"><Radio className="ml-px" /><Txt className="ml-[6px]" w={81}>When Rendering</Txt></div>
                <div className="flex h-4 items-center"><Radio className="ml-px" /><Txt className="ml-[6px]" w={43}>Manually</Txt></div>
                <Btn className="ml-[21px] mt-[6px] h-5 w-24" w={36}>Update</Btn>
              </Group>
            </div>
          </div>
        </div>
        <div className="ml-[3px] w-[5px] rounded-[3px] bg-[#3a3a3a]"><div className="h-[167px] rounded-[3px] bg-[#555]" /></div>
      </div>
    </div>
  );
}

function Timeline() {
  const ticks = Array.from({ length: 101 }, (_, i) => i);
  return (
    <div className="flex h-[52px] shrink-0">
      <div className="ml-[2px] mt-[7px] h-[43px] w-[4px] bg-[conic-gradient(#9a9a9a_25%,transparent_0)] bg-[length:2px_2px]" />
      <div className="ml-[3px] flex flex-1 flex-col">
        <div className="flex h-[26px] items-center gap-[3px] border-b border-[#111] pl-px pt-[2px] text-[#ddd]">
          <Btn className="h-[18px] w-[14px]">&lt;</Btn>
          <Btn className="-ml-px h-[18px] w-[123px]" w={34}>0 / 100</Btn>
          <Btn className="-ml-px h-[18px] w-[15px]">&gt;</Btn>
        </div>
        <div className="flex h-[26px]">
          <svg className="ml-[13px] mt-[7px] h-3 w-[15px]" viewBox="0 0 15 12" fill="none"><path d="M2 0v12" stroke={L} strokeWidth="3" strokeDasharray="1.500 1.200" /><path d="M5.500 7C7 1 8.500 0 9.500 4s2 9 4.500 3" stroke={T} strokeWidth="1.500" /></svg>
          <svg className="ml-[23px] h-[26px] w-[1256px] overflow-visible" viewBox="60 646 1256 26">
            <rect x="60" y="646" width="1256" height="25" fill="#2a2a2a" />
            <rect x="61.500" y="647.500" width="8" height="23" fill="#7d771f" stroke="#4d4a1c" />
            {ticks.map((i) => {
              const x = Math.floor(65 + i * 12.45) + 0.5;
              return <path key={i} d={`M${x} 646v${i % 5 ? 11 : 25}`} stroke="#7c7c7c" />;
            })}
            <g fontSize="11.500" textAnchor="middle" className="font-['Noto_Sans',sans-serif]">
              {ticks.filter((i) => i % 5 === 0).map((i) => (
                <text key={i} x={64.500 + i * 12.45} y="669" fill={i ? "#c4c4c4" : "#d8d05a"}>{i}</text>
              ))}
            </g>
          </svg>
        </div>
      </div>
    </div>
  );
}

function Coord({ l, w, v, ml }) {
  return (
    <div className={"flex items-center " + ml}>
      <Txt w={10} className="text-[#e8e8e8]">{l}</Txt>
      <div className="ml-[3px] flex h-[19px] w-[59px] items-center border border-[#4b4b4b] bg-[#545454] pl-[2px] text-[#8b8b8b]"><Txt w={w}>{v}</Txt></div>
    </div>
  );
}

function Ic({ className = "", tri, children }) {
  return <svg className={"h-[18px] w-[18px] shrink-0 overflow-visible " + className} viewBox="0 0 18 18" fill="none">{children}{tri && <path d="M19 15v4h-4z" fill="#e4e4e4" />}</svg>;
}

function Status() {
  return (
    <div className="flex h-[56px] shrink-0">
      <div className="ml-1 mt-[5px] flex w-[47px] flex-col gap-px">
        <div className="h-[23px] border-2 border-b-white border-l-[#777] border-r-white border-t-[#777] bg-[#dcc3c5]" />
        <div className="flex h-[23px] items-center border-2 border-b-[#ddd] border-l-[#777] border-r-[#ddd] border-t-[#777] bg-white pb-[2px] pl-[4px] text-[#777]"><Txt w={36} className="font-['Liberation_Mono',monospace] text-[12px]">MAXSc</Txt></div>
      </div>
      <div className="ml-[3px] mt-[3px] h-[50px] w-[3px] border-r border-black bg-[#303030]" />
      <div className="flex w-[854px] shrink-0 flex-col pl-[4px]">
        <div className="mt-[8px] flex h-5 items-center">
          <Txt w={84} className="text-white">1 Object Selected</Txt>
          <Ic className="-mt-[2px] ml-[324px]"><path d="M2 6V2h4M12 2h4v4M16 12v4h-4M6 16H2v-4" stroke={L} strokeWidth="1.500" /><rect x="6" y="6" width="6.500" height="6.500" fill={T} /></Ic>
          <Ic className="-mt-px ml-[9px]"><path d="M5.500 8V5q0-3 3.500-3t3.500 3v3" stroke={L} strokeWidth="2" /><path d="M4 8h10v8H4z" fill={L} /><path d="M9 10v4" stroke="#444" strokeWidth="2" /></Ic>
          <Ic className="-mt-[2px] ml-[9px]"><path d="M2.500 2.500h13v13h-13z" stroke={L} strokeWidth="1.500" /><path d="M9 4l5 5-5 5-5-5z" fill={L} /><circle cx="9" cy="9" r="2" fill="#444" /><path d="M9 2v3M9 13v3M2 9h3M13 9h3" stroke={L} strokeWidth="1.500" /></Ic>
          <Coord l="X:" v="31,048" w={35} ml="ml-[6px]" />
          <Coord l="Y:" v="-6,388" w={33} ml="ml-[12px]" />
          <Coord l="Z:" v="0,0" w={17} ml="ml-[12px]" />
          <Txt w={56} className="ml-[14px] text-white">Grid = 10,0</Txt>
        </div>
        <div className="mt-[4px] flex h-[21px] items-center pl-[713px]">
          <Sep />
          <div className="flex h-5 w-[21px] items-center justify-center rounded-[2px] bg-[#5d8ac4]"><svg className="h-4 w-4" viewBox="0 0 16 16"><path d="M8 1l6 3v7l-6 4-6-4V4zM2 4l6 3.500L14 4M8 7.500V15" fill="none" stroke="#333" strokeWidth="3" /><path d="M8 1l6 3v7l-6 4-6-4V4zM2 4l6 3.500L14 4M8 7.500V15M5 3l6 3M11 3L5 6" fill="none" stroke={L} /></svg></div>
          <Txt w={65} className="ml-[4px] text-[#ddd]">Add Time Tag</Txt>
        </div>
      </div>
      <div className="flex w-[121px] shrink-0 flex-col pl-px pt-[7px]">
        <div className="flex h-5 items-center">
          <Ic className="ml-px"><path d="M2.500 4v10M9 5l-4 4 4 4zM16 5l-4 4 4 4z" fill={L} stroke={L} strokeWidth="1.200" /></Ic>
          <Sep className="ml-[2px]" />
          <Ic className="ml-[4px]"><path d="M9 4v10L2 9zM10 4h2.500v10H10zM14 4h2.500v10H14z" fill={L} /></Ic>
          <Ic className="ml-[5px]" tri><path d="M3 2l12 7.500L3 16z" fill={L} /></Ic>
          <Ic className="ml-[5px]"><path d="M9 4v10l7-5zM2 4h2.500v10H2zM5.500 4h2.500v10H5.500z" fill={L} /></Ic>
          <Sep className="ml-[2px]" />
          <Ic className="ml-[3px]"><path d="M15.500 4v10M9 5l4 4-4 4zM2 5l4 4-4 4z" fill={L} stroke={L} strokeWidth="1.200" /></Ic>
        </div>
        <div className="mt-[2px] flex h-5 items-center">
          <Ic className="ml-px"><path d="M8 5v8L3 9zM10.500 5v8l5-4z" fill={L} /></Ic>
          <Sep className="ml-[2px]" />
          <Spin className="ml-px h-[18px] w-[69px]">0</Spin>
          <Sep className="ml-[2px]" />
          <Ic className="ml-[3px]"><circle cx="7" cy="7" r="5.500" fill={L} /><path d="M7 4v3.500h3" stroke="#333" strokeWidth="1.500" /><circle cx="12.500" cy="12.500" r="3" fill="#444" stroke={O} strokeWidth="2.200" /><circle cx="12.500" cy="12.500" r="4.500" stroke={O} strokeWidth="1.200" strokeDasharray="1.800 1.700" /></Ic>
        </div>
      </div>
      <Btn className="ml-[10px] mt-[7px] h-[43px] w-[43px]">
        <svg className="block h-8 w-8" viewBox="0 0 32 32"><path d="M11 3h6v9h9v6h-9v9h-6v-9H2v-6h9z" fill={L} stroke="#444" /><circle cx="20" cy="26" r="3.500" fill="none" stroke={T} strokeWidth="2.500" /><path d="M22 24l8-7M26 20l3 3M29 18l2 2" stroke={T} strokeWidth="2.500" /></svg>
      </Btn>
      <div className="ml-1 mt-[7px] flex flex-col gap-[2px]">
        <Btn className="h-[21px] w-[47px]" w={44}>Auto Key</Btn>
        <Btn className="h-5 w-[47px]" w={38}>Set Key</Btn>
      </div>
      <div className="ml-[5px] mt-[7px] flex w-[115px] flex-col">
        <Drop className="w-[115px] pr-[6px]" w={41}>Selected</Drop>
        <div className="mt-[3px] flex"><Ic className="ml-px mt-px" tri><path d="M3 17q3-7-2-12M15 17q-3-7 2-12" stroke={T} strokeWidth="2.200" /><path d="M2 3.500h14" stroke={L} strokeDasharray="2 1" /><rect x="7" y="1.500" width="4" height="4" fill="#444" stroke={L} /></Ic><Btn className="ml-[6px] h-[21px] w-[89px]" w={62}>Key Filters...</Btn></div>
      </div>
      <div className="ml-[11px] mt-[8px] grid h-10 grid-cols-[18px_18px_18px_18px] gap-x-[5px] gap-y-[4px]">
        <Ic><circle cx="11" cy="6.500" r="4.500" stroke={L} strokeWidth="1.800" /><path d="M7.500 10L2.500 15.500" stroke={L} strokeWidth="2.800" /></Ic>
        <Ic><path d="M7 1h4.500v4H7zM12.500 1h4v4h-4zM12.500 6h4v4h-4z" fill={T} /><circle cx="8" cy="8" r="3.500" fill="#444" stroke={T} strokeWidth="1.500" /><path d="M5.500 11l-4 4" stroke={L} strokeWidth="2.500" /></Ic>
        <Ic tri><path d="M2 5V2h3M12 2h3v3M2 12v3h3" stroke={L} strokeWidth="1.500" /><path d="M8.500 3.500l5.500 2v6l-5.500 3L3 11.500v-6z" fill={T} /><path d="M3 5.500l5.500 2 5.500-2" stroke="#444" /></Ic>
        <Ic tri><path d="M9 3l3-1.500L15 3v7l-3 2-3-2z" fill={T} /><path d="M1 9l3-1.500L6 9v2l-3 1.500L1 11zM5 12l2-1 3 1v2l-2 1.500L5 14z" fill={L} /></Ic>
        <Ic tri><path d="M3 3l11 5.500-11 6M6 5q4 4 1 7.500" stroke={L} strokeWidth="1.800" /></Ic>
        <Ic tri><path d="M4 10V5h1.500v3V2.500h2V7V1h2v6l.5-4.500h2V8v3l2-3h2l-3 6q-1 3-3 3H7q-2-1-3-5l-2-3 1-1z" fill={L} /></Ic>
        <Ic tri><circle cx="8.500" cy="8" r="5.500" fill={L} /><path d="M1 14q-1 3 5 0T16 2q-2-2-5 1" stroke="#444" strokeWidth="3" /><path d="M2 14q1 2 6-2t7-10" stroke={T} strokeWidth="1.600" /></Ic>
        <Ic><path d="M2 2h14v14H2z" stroke={L} strokeWidth="1.600" /><path d="M2 9h7v7H2z" fill={L} /><path d="M8 10l6-6M9.500 4H14v4.500" stroke={L} strokeWidth="1.800" /></Ic>
      </div>
    </div>
  );
}

export default function App() {
  return (
    <div className="flex h-[730px] w-[1366px] flex-col overflow-hidden bg-[#444] font-['Noto_Sans','Liberation_Sans',sans-serif] text-[12px]">
      <TitleBar />
      <MenuBar />
      <Toolbar />
      <Ribbon />
      <div className="flex h-[501px] shrink-0">
        <Explorer />
        <Viewport />
        <CommandPanel />
      </div>
      <Timeline />
      <Status />
      <div className="flex h-[2px] shrink-0 bg-[#536b70]">
        <div className="ml-[238px] h-px w-[58px] bg-[#c8d6d6]" />
        <div className="ml-[66px] h-px w-[58px] bg-[#c8d6d6]" />
        <div className="ml-[552px] h-px w-[58px] bg-[#eef]" />
        <div className="ml-[3px] h-px w-[58px] bg-[#9bb]" />
        <div className="ml-[3px] h-px w-[56px] bg-[#eef]" />
      </div>
    </div>
  );
}
